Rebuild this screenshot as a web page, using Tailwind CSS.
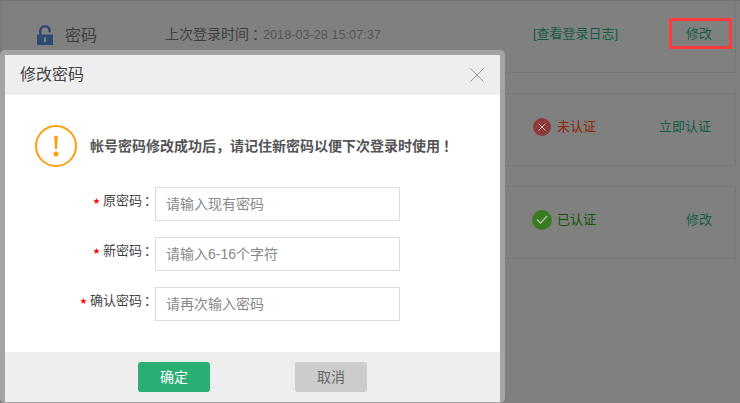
<!DOCTYPE html>
<html lang="zh"><head><meta charset="utf-8">
<script src="https://cdn.jsdelivr.net/npm/@tailwindcss/browser@4"></script>
</head>
<body class="m-0">
<div class="relative w-[740px] h-[403px] overflow-hidden bg-[#808080] font-['Liberation_Sans','Noto_Sans_CJK_SC',sans-serif] text-[13px]">
  <!-- background page -->
  <div class="flex flex-col gap-[20px] pr-[4px] border-t border-[#737373]">
    <div class="h-[72px] border border-t-0 border-[#777] flex items-center text-[#3e3e3e] relative">
      <svg class="ml-[36px] shrink-0 mb-[4px]" width="16" height="20" viewBox="0 0 16 20"><rect x="0" y="9.500" width="16" height="10.500" fill="#2f4a70"/><path d="M3.300 10V6a4.700 4.700 0 0 1 9.400 0V7.300" fill="none" stroke="#2f4a70" stroke-width="2.600"/><rect x="7" y="12.500" width="2" height="4.500" fill="#808080"/></svg>
      <span class="ml-[12px] text-[16px] leading-none w-[100px] shrink-0 mb-[2px]">密码</span>
      <span class="text-[14px] mb-[5px] w-[368px] shrink-0">上次登录时间<span class="font-['Noto_Sans_CJK_TC'] pl-[3px] -mr-[3px]">：</span><span class="text-[12.700px] text-[#555]">2018-03-28 15:07:37</span></span>
      <span class="text-[#165c45] text-[13px] mb-[6px] w-[153px] shrink-0">[查看登录日志]</span>
      <span class="text-[#165c45] text-[13px] mb-[6px] shrink-0">修改</span>
    </div>
    <div class="h-[73px] border border-[#777] flex items-center text-[13px] pb-[6px] pl-[532px]">
      <span class="w-[18px] h-[18px] rounded-full bg-[#8f3a3a] flex items-center justify-center mr-[6px] shrink-0"><svg width="8" height="8" viewBox="0 0 8 8"><path d="M.5.500l7 7M7.500.500l-7 7" stroke="#bbb" stroke-width="1"/></svg></span>
      <span class="text-[#8f2500] w-[102px] shrink-0">未认证</span>
      <span class="text-[#165c45] shrink-0">立即认证</span>
    </div>
    <div class="h-[73px] border border-[#777] flex items-center text-[13px] pb-[6px] pl-[531px]">
      <span class="w-[20px] h-[20px] rounded-full bg-[#3a7a20] flex items-center justify-center mr-[5px] shrink-0"><svg width="12" height="9" viewBox="0 0 12 9"><path d="M1 4.500l3.500 3.500L11 1" fill="none" stroke="#b5c9ad" stroke-width="1.300"/></svg></span>
      <span class="text-[#0f5700] w-[129px] shrink-0">已认证</span>
      <span class="text-[#165c45] shrink-0">修改</span>
    </div>
  </div>
  <!-- highlight around the first action -->
  <div class="absolute left-[669px] top-[18px] w-[63px] h-[31px] border-[3px] border-[#ff3b3b]"></div>

  <!-- modal -->
  <div class="absolute left-0 top-[50px] w-[505px] h-[353px] border-[5px] border-b-[1px] border-[#a3a3a3] rounded-[5px] flex flex-col bg-white">
    <div class="h-[40px] shrink-0 bg-[#eeeeee] flex items-center justify-between pl-[15px] pr-[16px]">
      <span class="text-[16px] text-[#444]">修改密码</span>
      <svg width="14" height="14" viewBox="0 0 14 14"><path d="M.5.500l13 13M13.500.500l-13 13" stroke="#999" stroke-width="1"/></svg>
    </div>
    <div class="flex-1 flex flex-col">
      <div class="flex items-center pt-[30px] pl-[30px] gap-[13px]">
        <span class="relative w-[42px] h-[42px] rounded-full border-2 border-[#ff9f0f] flex items-center justify-center text-[#ff9f0f]">
          <svg width="6" height="22" viewBox="0 0 6 22"><path d="M1.200 1h3.600l-.8 13H2z" fill="#ff9f0f"/><circle cx="3" cy="19" r="2.500" fill="#ff9f0f"/></svg>
        </span>
        <p class="text-[14px] font-bold text-[#555]">帐号密码修改成功后，请记住新密码以便下次登录时使用<span class="font-['Noto_Sans_CJK_TC'] pl-[3px]">！</span></p>
      </div>
      <div class="flex flex-col gap-[16px] mt-[20px]">
        <div class="flex items-center">
          <label class="w-[150px] text-right text-[13px] text-[#444] -mt-[8px]"><span class="text-[#f00] text-[7px] mr-[3px] align-[2px]">★</span>原密码<span class="font-['Noto_Sans_CJK_TC'] pl-[2px] -mr-[2px]">：</span></label>
          <div class="w-[245px] h-[34px] border border-[#ddd] pl-[10px] flex items-center text-[14px] text-[#888]">请输入现有密码</div>
        </div>
        <div class="flex items-center">
          <label class="w-[150px] text-right text-[13px] text-[#444] -mt-[8px]"><span class="text-[#f00] text-[7px] mr-[3px] align-[2px]">★</span>新密码<span class="font-['Noto_Sans_CJK_TC'] pl-[2px] -mr-[2px]">：</span></label>
          <div class="w-[245px] h-[34px] border border-[#ddd] pl-[10px] flex items-center text-[14px] text-[#888]">请输入6-16个字符</div>
        </div>
        <div class="flex items-center">
          <label class="w-[150px] text-right text-[13px] text-[#444] -mt-[8px]"><span class="text-[#f00] text-[7px] mr-[3px] align-[2px]">★</span>确认密码<span class="font-['Noto_Sans_CJK_TC'] pl-[2px] -mr-[2px]">：</span></label>
          <div class="w-[245px] h-[34px] border border-[#ddd] pl-[10px] flex items-center text-[14px] text-[#888]">请再次输入密码</div>
        </div>
      </div>
    </div>
    <div class="h-[50px] shrink-0 bg-[#eeeeee] flex items-start pt-[10px] pl-[133px] gap-[85px]">
      <span class="w-[72px] h-[30px] rounded-[3px] bg-[#2bae74] text-white text-[14px] flex items-center justify-center">确定</span>
      <span class="w-[72px] h-[30px] rounded-[3px] bg-[#cccccc] text-[#666] text-[14px] flex items-center justify-center">取消</span>
    </div>
  </div>
</div>
</body></html>
